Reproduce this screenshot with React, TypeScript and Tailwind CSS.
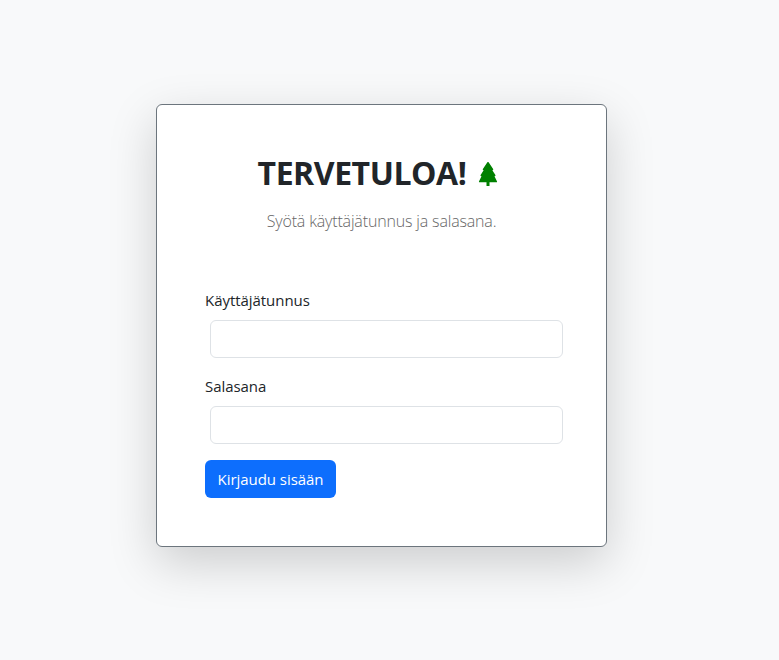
import { BsTreeFill } from "react-icons/bs";

function Field({ id, label, type }: { id: string; label: string; type: string }) {
  return (
    <div className="mb-4">
      <label htmlFor={id} className="mb-2 block h-6 whitespace-nowrap text-[15px] leading-6 tracking-[-0.05px]">{label}</label>
      <input id={id} type={type} className="ml-[5px] block h-[38px] w-[353px] rounded-md border border-[#dee2e6] bg-white px-3 outline-none" />
    </div>
  );
}

export default function App() {
  return (
    <main className="flex h-[660px] w-full items-start justify-start bg-[#f8f9fa] pl-[156px] pt-[104px] font-['Open_Sans',sans-serif] text-base leading-6 text-[#212529]">
      <section className="h-[443px] w-[451px] rounded-md border border-[#6c757d] bg-white p-12 shadow-[0_16px_48px_rgba(0,0,0,0.175)]">
        <h2 className="mb-[17px] flex h-[39px] items-center justify-center pt-px pr-[5px] text-[32px] font-bold leading-[38px]">
          <span className="whitespace-nowrap tracking-[-0.45px]">TERVETULOA!</span>
          <BsTreeFill className="mt-px ml-[10px] size-6 text-[#008000]" />
        </h2>
        <p className="mb-[55px] text-center text-base font-light leading-6 tracking-[-0.16px] text-[#666666]">Syötä käyttäjätunnus ja salasana.</p>
        <form>
          <Field id="user" label="Käyttäjätunnus" type="text" />
          <Field id="password" label="Salasana" type="password" />
          <button type="button" className="h-[38px] w-[131px] whitespace-nowrap rounded-md bg-[#0d6efd] text-[15px] tracking-[-0.05px] text-white">Kirjaudu sisään</button>
        </form>
      </section>
    </main>
  );
}
